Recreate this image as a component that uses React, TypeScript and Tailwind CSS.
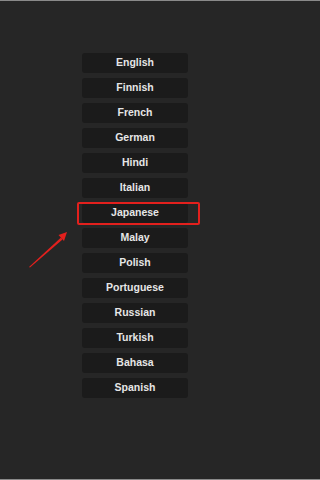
const LANGUAGES = [
  'English',
  'Finnish',
  'French',
  'German',
  'Hindi',
  'Italian',
  'Japanese',
  'Malay',
  'Polish',
  'Portuguese',
  'Russian',
  'Turkish',
  'Bahasa',
  'Spanish',
]

export default function App() {
  return (
    <div
      className="h-[480px] w-full overflow-hidden border-y border-[#8a8a8a] bg-[#262626]"
      style={{ fontFamily: '"Liberation Sans", Arial, sans-serif' }}
    >
      <div className="relative h-full w-[270px]">
        <div className="flex flex-col items-center gap-[5px] pt-[52px]">
          {LANGUAGES.map((lang) => (
            <button
              key={lang}
              type="button"
              className="flex h-[20px] w-[106px] items-center justify-center rounded-[3px] bg-[#1b1b1b] text-[10.5px] font-bold text-[#e6e6e6]"
            >
              {lang}
            </button>
          ))}
        </div>

        {/* Highlight box around Japanese */}
        <div className="absolute left-[77px] top-[201px] h-[23px] w-[123px] rounded-[2px] border-2 border-[#e3201d]" />

        {/* Arrow */}
        <svg className="absolute left-0 top-0" width="270" height="480" viewBox="0 0 270 480">
          <polygon points="29,266 61,236.5 62.5,238.5 30,266.5" fill="#e3201d" />
          <polygon points="67,231 58.5,234 64,240" fill="#e3201d" />
        </svg>
      </div>
    </div>
  )
}
